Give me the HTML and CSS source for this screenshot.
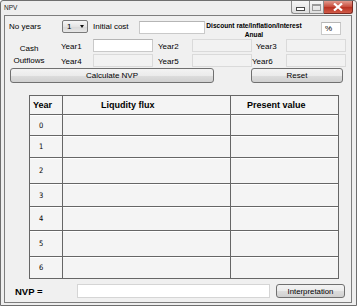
FILE: index.html
```html
<!DOCTYPE html>
<html>
	<head>
		<meta charset="utf-8">
		<title>NPV</title>
		<link rel="stylesheet" href="styles.css">
	</head>
	<body>
		<div class="window">
			<div class="titlebar">
				<span class="titlebar__text">NPV</span>
				<div class="titlebar__controls">
					<span class="ctl ctl-min"><svg width="9" height="4" viewBox="0 0 9 4"><rect x="0.5" y="0.5" width="8" height="3" fill="#fff" stroke="#4a4a4a"/></svg></span>
					<span class="ctl ctl-max"><svg width="9" height="7" viewBox="0 0 9 7"><rect x="0.5" y="0.5" width="8" height="6" fill="none" stroke="#9a9a9a"/><rect x="1" y="1" width="7" height="1" fill="#9a9a9a"/></svg></span>
					<span class="ctl ctl-close"><svg width="10" height="8" viewBox="0 0 10 8"><path d="M1 0.5 L9 7.5 M9 0.5 L1 7.5" stroke="#fff" stroke-width="2.2"/></svg></span>
				</div>
			</div>
			<div class="client">
				<div class="row-top">
					<span class="lbl lbl-years">No years</span>
					<span class="combo"><span>1</span><i class="combo__arrow"></i></span>
					<span class="lbl lbl-initial">Initial cost</span>
					<span class="field field-initial"></span>
					<span class="discount">Discount rate/Inflation/Interest<br>Anual</span>
					<span class="field field-pct">%</span>
				</div>

				<div class="cash">
					<span class="cash__title cash__title--top">Cash</span>
					<span class="lbl cash__lbl">Year1</span>
					<span class="field"></span>
					<span class="lbl cash__lbl cash__lbl--wide">Year2</span>
					<span class="field field-off"></span>
					<span class="lbl cash__lbl">Year3</span>
					<span class="field field-off"></span>

					<span class="cash__title">Outflows</span>
					<span class="lbl cash__lbl">Year4</span>
					<span class="field field-off"></span>
					<span class="lbl cash__lbl cash__lbl--wide">Year5</span>
					<span class="field field-off"></span>
					<span class="lbl cash__lbl">Year6</span>
					<span class="field field-off"></span>
				</div>

				<div class="actions">
					<button type="button" class="btn btn-calc">Calculate NVP</button>
					<button type="button" class="btn btn-reset">Reset</button>
				</div>

				<div class="grid">
					<div class="grid__cell grid__head">Year</div>
					<div class="grid__cell grid__head grid__head--flux">Liqudity flux</div>
					<div class="grid__cell grid__head grid__head--pv">Present value</div>

					<div class="grid__cell grid__num">0</div>
					<div class="grid__cell"></div>
					<div class="grid__cell"></div>

					<div class="grid__cell grid__num">1</div>
					<div class="grid__cell"></div>
					<div class="grid__cell"></div>

					<div class="grid__cell grid__num">2</div>
					<div class="grid__cell"></div>
					<div class="grid__cell"></div>

					<div class="grid__cell grid__num">3</div>
					<div class="grid__cell"></div>
					<div class="grid__cell"></div>

					<div class="grid__cell grid__num">4</div>
					<div class="grid__cell"></div>
					<div class="grid__cell"></div>

					<div class="grid__cell grid__num">5</div>
					<div class="grid__cell"></div>
					<div class="grid__cell"></div>

					<div class="grid__cell grid__num grid__last">6</div>
					<div class="grid__cell grid__last"></div>
					<div class="grid__cell grid__last"></div>
				</div>

				<div class="result">
					<span class="result__lbl">NVP =</span>
					<span class="field field-result"></span>
					<button type="button" class="btn btn-interp">Interpretation</button>
				</div>
			</div>
		</div>
	</body>
</html>
```

FILE: styles.css
```css
html, body { margin:0; padding:0; }
body{ width:357px; height:306px; background:#fff; font-family:"Liberation Sans", Arial, sans-serif; font-size:8px; color:#000; }

.window{ box-sizing:border-box; width:357px; height:306px; padding:0 4px 2px 3px; border:1px solid #6e6e6e; border-radius:3px 3px 0 0; background:#eeeeee; }
.titlebar{ display:flex; justify-content:space-between; height:14px; }
.titlebar__text{ padding:3px 0 0 0; font-size:6.5px; line-height:7px; color:#222; }
.titlebar__controls{ display:flex; height:13px; margin-right:-1px; }
.ctl{ display:flex; align-items:center; justify-content:center; box-sizing:border-box; height:13px; border:1px solid #8c8c8c; border-top:0; background:linear-gradient(#f6f6f6, #dedede); }
.ctl-min{ width:18px; border-radius:0 0 0 3px; border-right:0; }
.ctl-max{ width:15px; }
.ctl-close{ width:29px; border-color:#7a2a22; border-left:0; border-radius:0 0 3px 0; background:linear-gradient(#e29a8d, #c74a3a 50%, #b83020 51%, #d05a48); }
.ctl-min svg{ margin-top:4px; }

.client{ box-sizing:border-box; height:288px; border:1px solid #7d7d7d; background:#f0f0f0; }

.lbl{ line-height:13px; white-space:nowrap; }
.field{ display:block; box-sizing:border-box; height:13px; border:1px solid #c9c9c9; border-top-color:#b5b5b5; background:#fff; }
.field-off{ background:#f2f2f2; border-color:#dadada; }

.row-top{ display:flex; align-items:flex-start; height:14px; margin-top:4px; padding-left:4px; }
.lbl-years{ width:53px; line-height:14px; }
.combo{ display:flex; align-items:center; justify-content:space-between; box-sizing:border-box; width:26px; height:13px; padding:0 3px 0 4px; border:1px solid #7a7a7a; border-radius:2px; background:linear-gradient(#f6f6f6, #e4e4e4 50%, #d8d8d8 51%, #e6e6e6); line-height:11px; }
.combo__arrow{ width:0; height:0; border-left:2.5px solid transparent; border-right:2.5px solid transparent; border-top:3px solid #111; }
.lbl-initial{ width:46px; margin-left:5px; line-height:14px; }
.field-initial{ width:66px; margin-top:1px; }
.discount{ width:96px; margin:1px 0 0 1px; font-size:6.6px; font-weight:bold; line-height:9px; text-align:center; white-space:nowrap; }
.field-pct{ width:20px; margin:2px 0 0 19px; padding-left:3px; line-height:11px; font-size:8px; }

.cash{ display:grid; grid-template-columns:56px 32px 60px 39px 60px 34px 60px; grid-template-rows:13px 13px; row-gap:2px; margin-top:5px; }
.cash__title{ padding-right:8px; text-align:center; line-height:13px; }
.cash__title--top{ padding-top:3px; }
.cash__lbl{ padding-top:1px; }
.cash__lbl--wide{ padding-left:5px; }
.cash__lbl:nth-child(6), .cash__lbl:nth-child(14){ padding-left:4px; }

.actions{ display:flex; height:15px; margin-top:1px; padding-left:5px; }
.btn{ box-sizing:border-box; margin:0; padding:0; border:1px solid #707070; border-radius:3px; background:linear-gradient(#f3f3f3, #ebebeb 50%, #dddddd 51%, #d0d0d0); font-family:"Liberation Sans", Arial, sans-serif; font-size:8px; color:#000; }
.btn-calc{ width:204px; height:15px; }
.btn-reset{ width:92px; height:15px; margin-left:37px; }

.grid{ display:grid; box-sizing:border-box; width:310px; margin:12px 0 0 24px; grid-template-columns:33px 168px 107px; grid-template-rows:19px 21px 22px 26px 23px 24px 26px 21px; border:1px solid #666; background:#f4f4f4; }
.grid__cell{ display:flex; align-items:center; box-sizing:border-box; border-right:1px solid #666; border-bottom:1px solid #666; box-shadow:inset 0 1px 0 #fff; }
.grid__cell:nth-child(3n){ border-right:0; }
.grid__head{ padding-left:3px; font-size:9px; font-weight:bold; box-shadow:none; }
.grid__head--flux{ padding-left:38px; }
.grid__head--pv{ padding-left:16px; }
.grid__num{ padding-left:9px; font-family:"Liberation Sans Narrow", "DejaVu Sans Condensed", sans-serif; font-size:7.5px; }
.grid__last{ border-bottom:0; }

.result{ display:flex; align-items:center; height:14px; margin-top:5px; }
.result__lbl{ width:62px; padding-left:10px; font-size:9.5px; font-weight:bold; }
.field-result{ width:193px; height:14px; border-color:#d5d5d5; }
.btn-interp{ width:69px; height:14px; margin-left:6px; font-size:7.8px; }
```
